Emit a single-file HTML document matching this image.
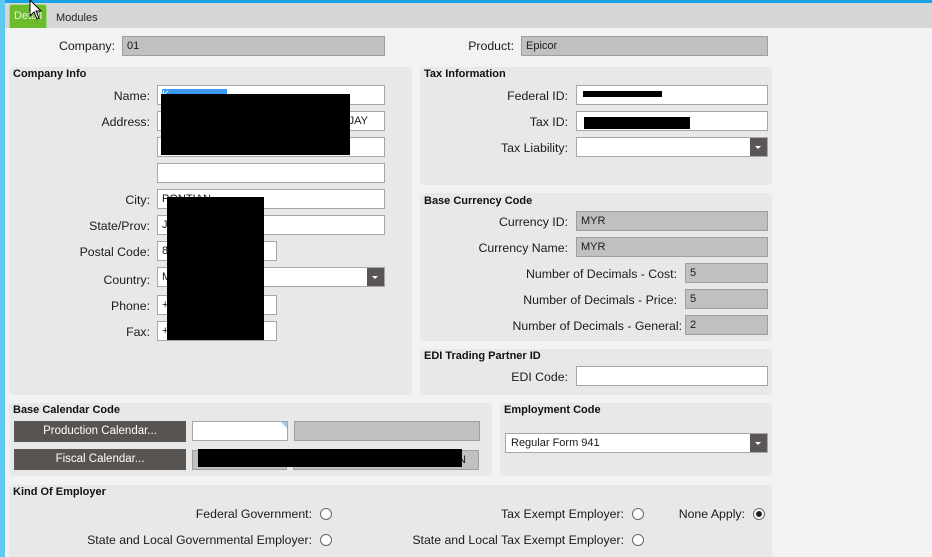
<!DOCTYPE html>
<html style="height:557px;overflow:hidden"><head><meta charset="utf-8"><style>
*{margin:0;padding:0;box-sizing:border-box}
body{width:932px;height:557px;overflow:hidden;background:#f2f2f4;font-family:"Liberation Sans",Arial,sans-serif;font-size:12.3px;color:#1a1a1a;position:relative}
.a{position:absolute}
.p{position:absolute;background:#e8e8e8;border-radius:4px}
.t{position:absolute;font-weight:bold;font-size:11px;color:#111}
.l{position:absolute;text-align:right;white-space:nowrap;line-height:21px}
.f{position:absolute;height:20px;background:#fff;border:1px solid #a6a6a6;line-height:18px;padding-left:4px;font-size:11px;white-space:nowrap;overflow:hidden}
.g{background:#c0c0c0;border-color:#9e9e9e}
.dd{position:absolute;right:0;top:0;width:17px;height:18px;background:#5a5655}
.dd:after{content:"";position:absolute;left:5px;top:8px;border-left:3px solid transparent;border-right:3px solid transparent;border-top:3px solid #fff}
.k{position:absolute;background:#000}
.btn{position:absolute;background:#575451;color:#fff;text-align:center;line-height:21px;font-size:11.5px}
.r{position:absolute;width:12px;height:12px;border:1px solid #666;border-radius:50%;background:#fff}
</style></head><body>
<div class="a" style="left:0;top:0;width:932px;height:3px;background:#1aa3e4"></div>
<div class="a" style="left:0;top:0;width:5px;height:557px;background:#5ec8ee"></div>
<div class="a" style="left:5px;top:3px;width:927px;height:25px;background:#d6d6d6"></div>
<div class="a" style="left:9px;top:4px;width:38px;height:24px;background:#6cbb2c;border:1px solid #a6d98a;border-bottom:none;border-radius:3px 3px 0 0;color:#e8f4dc;font-size:11px;line-height:22px;padding-left:4px">Detail</div>
<div class="a" style="left:56px;top:12px;font-size:11px;color:#222">Modules</div>
<svg class="a" style="left:29px;top:0" width="14" height="22"><path d="M1 0 L1 16 L5 12 L8 19 L10 18 L7 11 L12 11 Z" fill="#fff" stroke="#000" stroke-width="1"/></svg>

<div class="l" style="right:817px;top:36px">Company:</div>
<div class="f g" style="left:122px;top:36px;width:263px">01</div>
<div class="l" style="right:418px;top:36px">Product:</div>
<div class="f g" style="left:521px;top:36px;width:247px">Epicor</div>

<div class="p" style="left:9px;top:67px;width:403px;height:328px"></div>
<div class="t" style="left:13px;top:68px">Company Info</div>
<div class="l" style="right:782px;top:86px">Name:</div>
<div class="f" style="left:157px;top:85px;width:228px"><span style="background:#3b9aef;color:#fff">K... ....... ... ...</span></div>
<div class="l" style="right:782px;top:112px">Address:</div>
<div class="f" style="left:157px;top:111px;width:228px;text-align:right;padding-right:16px">JAY</div>
<div class="f" style="left:157px;top:137px;width:228px"></div>
<div class="f" style="left:157px;top:163px;width:228px"></div>
<div class="l" style="right:782px;top:190px">City:</div>
<div class="f" style="left:157px;top:189px;width:228px">PONTIAN</div>
<div class="l" style="right:782px;top:216px">State/Prov:</div>
<div class="f" style="left:157px;top:215px;width:228px">J</div>
<div class="l" style="right:782px;top:242px">Postal Code:</div>
<div class="f" style="left:157px;top:241px;width:120px">8</div>
<div class="l" style="right:782px;top:270px">Country:</div>
<div class="f" style="left:157px;top:267px;width:228px">M<div class="dd"></div></div>
<div class="l" style="right:782px;top:296px">Phone:</div>
<div class="f" style="left:157px;top:295px;width:120px">+</div>
<div class="l" style="right:782px;top:322px">Fax:</div>
<div class="f" style="left:157px;top:321px;width:120px">+</div>
<div class="k" style="left:161px;top:94px;width:189px;height:61px"></div>
<div class="k" style="left:167px;top:197px;width:97px;height:143px"></div>

<div class="p" style="left:420px;top:67px;width:352px;height:118px"></div>
<div class="t" style="left:424px;top:68px">Tax Information</div>
<div class="l" style="right:364px;top:86px">Federal ID:</div>
<div class="f" style="left:576px;top:85px;width:192px"></div>
<div class="k" style="left:583px;top:91px;width:79px;height:6px"></div>
<div class="l" style="right:364px;top:112px">Tax ID:</div>
<div class="f" style="left:576px;top:111px;width:192px"></div>
<div class="k" style="left:584px;top:117px;width:106px;height:12px"></div>
<div class="l" style="right:364px;top:138px">Tax Liability:</div>
<div class="f" style="left:576px;top:137px;width:192px"><div class="dd"></div></div>

<div class="p" style="left:420px;top:193px;width:352px;height:148px"></div>
<div class="t" style="left:424px;top:195px">Base Currency Code</div>
<div class="l" style="right:364px;top:212px">Currency ID:</div>
<div class="f g" style="left:576px;top:211px;width:192px">MYR</div>
<div class="l" style="right:364px;top:238px">Currency Name:</div>
<div class="f g" style="left:576px;top:237px;width:192px">MYR</div>
<div class="l" style="right:255px;top:264px">Number of Decimals - Cost:</div>
<div class="f g" style="left:685px;top:263px;width:83px">5</div>
<div class="l" style="right:255px;top:290px">Number of Decimals - Price:</div>
<div class="f g" style="left:685px;top:289px;width:83px">5</div>
<div class="l" style="right:250px;top:316px">Number of Decimals - General:</div>
<div class="f g" style="left:685px;top:315px;width:83px">2</div>

<div class="p" style="left:420px;top:349px;width:352px;height:46px"></div>
<div class="t" style="left:424px;top:350px">EDI Trading Partner ID</div>
<div class="l" style="right:364px;top:367px">EDI Code:</div>
<div class="f" style="left:576px;top:366px;width:192px"></div>

<div class="p" style="left:9px;top:403px;width:483px;height:73px"></div>
<div class="t" style="left:13px;top:404px">Base Calendar Code</div>
<div class="btn" style="left:14px;top:421px;width:172px">Production Calendar...</div>
<div class="btn" style="left:14px;top:449px;width:172px">Fiscal Calendar...</div>
<div class="f" style="left:192px;top:421px;width:96px"></div>
<div class="a" style="left:281px;top:422px;width:0;height:0;border-top:6px solid #a9c4e0;border-left:6px solid transparent"></div>
<div class="f g" style="left:294px;top:421px;width:186px"></div>
<div class="f g" style="left:192px;top:450px;width:95px"></div>
<div class="f g" style="left:293px;top:450px;width:186px;text-align:right;padding-right:12px">N</div>
<div class="k" style="left:198px;top:449px;width:264px;height:18px"></div>

<div class="p" style="left:500px;top:403px;width:272px;height:73px"></div>
<div class="t" style="left:504px;top:404px">Employment Code</div>
<div class="f" style="left:505px;top:433px;width:263px;padding-left:5px">Regular Form 941<div class="dd"></div></div>

<div class="p" style="left:9px;top:485px;width:763px;height:80px"></div>
<div class="t" style="left:13px;top:486px">Kind Of Employer</div>
<div class="l" style="right:620px;top:504px">Federal Government:</div>
<div class="r" style="left:320px;top:508px"></div>
<div class="l" style="right:620px;top:530px">State and Local Governmental Employer:</div>
<div class="r" style="left:320px;top:534px"></div>
<div class="l" style="right:308px;top:504px">Tax Exempt Employer:</div>
<div class="r" style="left:632px;top:508px"></div>
<div class="l" style="right:308px;top:530px">State and Local Tax Exempt Employer:</div>
<div class="r" style="left:632px;top:534px"></div>
<div class="l" style="right:187px;top:504px">None Apply:</div>
<div class="r" style="left:753px;top:508px"><div class="a" style="left:2px;top:2px;width:6px;height:6px;border-radius:50%;background:#222"></div></div>
</body></html>
